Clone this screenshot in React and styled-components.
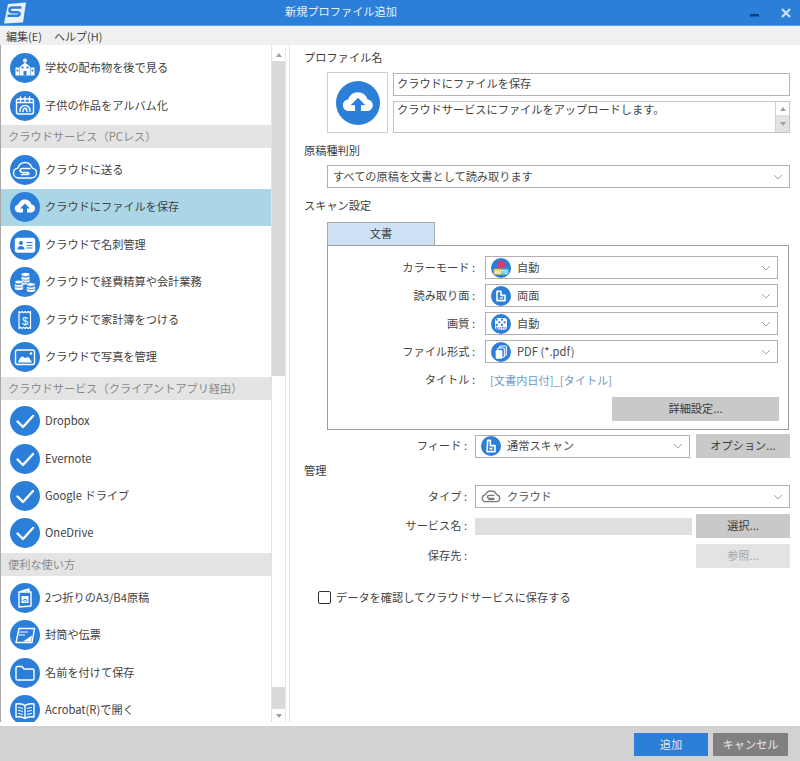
import React from 'react';
import styled, { createGlobalStyle } from 'styled-components';

const BLUE = '#2b7fd9';

const GlobalStyle = createGlobalStyle`
    html, body {
        margin: 0;
        padding: 0;
        background: #fff;
    }
    * {
        box-sizing: border-box;
    }
    body {
        font-family: "Noto Sans CJK JP", "Noto Sans", sans-serif;
        font-size: 11.2px;
        color: #424242;
    }
`;

const Window = styled.div`
    width: 800px;
    height: 761px;
    display: grid;
    grid-template-columns: 800px;
    grid-template-rows: 26px 19px 681px 35px;
    overflow: hidden;
`;

const TitleBar = styled.div`
    display: flex;
    align-items: center;
    background: ${BLUE};
    padding: 0 9px 0 3px;
    border-bottom: 1px solid #5f9fe0;
`;

const Title = styled.div`
    margin-left: 258px;
    padding-bottom: 4px;
    color: #e8f1fb;
`;

const WindowButtons = styled.div`
    margin-left: auto;
    display: flex;
    align-items: center;
    gap: 22px;
    svg:first-child {
        margin-top: 4px;
    }
`;

const MenuBar = styled.div`
    display: flex;
    align-items: center;
    gap: 12px;
    padding-left: 6px;
    background: #f0f0f0;
    font-size: 11px;
    color: #444;
`;

const Body = styled.div`
    display: flex;
    min-height: 0;
`;

const Sidebar = styled.div`
    width: 290px;
    height: 677px;
    flex: none;
    display: flex;
    align-items: flex-start;
    border-left: 1px solid #a8a8a8;
    border-right: 1px solid #dedede;
`;

const List = styled.div`
    width: 271px;
    height: 677px;
    flex: none;
    overflow: hidden;
    padding-top: 4.500px;
    border-right: 1px solid #e2e2e2;
`;

const Group = styled.div`
    background: #e4e4e4;
    color: #8a8a8a;
    height: 23px;
    line-height: 22px;
    padding-left: 7px;
    margin: 1px 0 3px;
`;

const Item = styled.div`
    display: flex;
    align-items: center;
    gap: 5px;
    height: 37.400px;
    padding-left: 9px;
    background: ${(p) => (p.$active ? '#aad6e6' : 'transparent')};
`;

const ItemLabel = styled.span`
    margin-top: -2px;
`;

const ScrollColumn = styled.div`
    width: 14px;
    flex: none;
    margin-top: 3px;
    display: flex;
    flex-direction: column;
    border-right: 1px solid #e6e6e6;
`;

const ScrollArrow = styled.div`
    height: ${(p) => p.$h || 13}px;
    display: flex;
    align-items: center;
    justify-content: center;
    background: ${(p) => p.$bg || '#fff'};
    &::after {
        content: '';
        border-left: 3.500px solid transparent;
        border-right: 3.500px solid transparent;
        ${(p) => (p.$down ? 'border-top' : 'border-bottom')}: 4px solid #a0a0a0;
    }
`;

const ScrollPart = styled.div`
    height: ${(p) => p.$h}px;
    background: ${(p) => (p.$thumb ? '#fff' : '#dadada')};
`;

const Main = styled.div`
    flex: 1;
    min-width: 0;
    padding: 5px 10px 0 14px;
`;

const Heading = styled.div`
    height: 16px;
    line-height: 14px;
    margin-top: ${(p) => p.$mt || 0}px;
    color: #3c3c3c;
`;

const ProfileRow = styled.div`
    margin: 6px 0 0 23px;
    display: flex;
    gap: 5px;
    height: 61px;
`;

const IconBox = styled.div`
    width: 61px;
    flex: none;
    display: flex;
    align-items: center;
    justify-content: center;
    border: 1px solid #cfcfcf;
`;

const ProfileFields = styled.div`
    flex: 1;
    display: flex;
    flex-direction: column;
    gap: 5px;
    padding-top: 1px;
`;

const NameInput = styled.div`
    height: 23px;
    line-height: 19px;
    padding-left: 3px;
    border: 1px solid #b4b4b4;
`;

const DescBox = styled.div`
    flex: 1;
    display: flex;
    justify-content: space-between;
    border: 1px solid #c4c4c4;
    padding-left: 3px;
    line-height: 15px;
`;

const DescScroll = styled.div`
    width: 14px;
    display: flex;
    flex-direction: column;
    border-left: 1px solid #d0d0d0;
    background: #f4f4f4;
`;

const Dropdown = styled.div`
    display: flex;
    align-items: center;
    gap: 6px;
    height: 23px;
    padding: 0 6px 0 5px;
    border: 1px solid #b0b0b0;
    background: #fff;
    margin: ${(p) => p.$margin || 0};
    grid-column: ${(p) => p.$span || 'auto'};
    color: ${(p) => p.$color || '#4a4a4a'};
`;

const DropdownText = styled.span`
    flex: 1;
    margin-top: -2px;
`;

const Tab = styled.div`
    width: 108px;
    height: 24px;
    margin: 8px 0 0 23px;
    line-height: 20px;
    text-align: center;
    background: #cfe2f5;
    border: 1px solid #a8a8a8;
    border-bottom: none;
`;

const ScanPanel = styled.div`
    height: 185px;
    margin: -1px 1px 0 23px;
    padding: 10px 10px 0 0;
    border: 1px solid #9c9c9c;
    display: grid;
    grid-template-columns: 147px 1fr;
    column-gap: 10px;
    row-gap: 5px;
    grid-auto-rows: 23px;
`;

const RowLabel = styled.div`
    text-align: right;
    align-self: center;
    margin-top: -2px;
    color: #444;
    white-space: pre;
`;

const TitleLink = styled.div`
    align-self: center;
    padding-left: 5px;
    color: #6f97c6;
`;

const GreyButton = styled.div`
    height: 24px;
    line-height: 23px;
    text-align: center;
    background: ${(p) => (p.$disabled ? '#e3e3e3' : '#c9c9c9')};
    color: ${(p) => (p.$disabled ? '#a8a8a8' : '#3c3c3c')};
`;

const DetailButton = styled(GreyButton)`
    grid-column: 2;
    justify-self: end;
    width: 167px;
    margin: 1px -1px 0 0;
`;

const FormGrid = styled.div`
    display: grid;
    grid-template-columns: 167px 217px 94px;
    column-gap: 4px;
    margin-top: ${(p) => p.$mt}px;
    row-gap: 6px;
    grid-auto-rows: minmax(23px, auto);
    align-items: center;
`;

const FormLabel = styled(RowLabel)`
    margin-right: 4px;
`;

const ServiceField = styled.div`
    height: 17px;
    background: #dfdfdf;
`;

const CheckRow = styled.div`
    display: flex;
    align-items: center;
    gap: 5px;
    margin: 21px 0 0 14px;
    color: #444;
`;

const CheckBox = styled.div`
    width: 13px;
    height: 13px;
    border: 1px solid #333;
    border-radius: 2px;
`;

const Footer = styled.div`
    display: flex;
    justify-content: flex-end;
    align-items: flex-start;
    gap: 5px;
    padding: 7px 12px 0 0;
    background: #d2d2d2;
`;

const FooterButton = styled.div`
    width: ${(p) => p.$w}px;
    height: 23px;
    line-height: 22px;
    text-align: center;
    color: #e8e8e8;
    background: ${(p) => p.$bg};
`;

const Disc = ({ size = 30, children, color = BLUE }) => (
    <svg width={size} height={size} viewBox="0 0 30 30" style={{ flex: 'none' }}>
        <circle cx="15" cy="15" r="15" fill={color} />
        {children}
    </svg>
);

const line = { fill: 'none', stroke: '#fff', strokeWidth: 1.4, strokeLinejoin: 'round', strokeLinecap: 'round' };

const UploadGlyph = () => (
    <>
        <path d="M9 20.500c-2.600 0-4.300-1.800-4.300-4 0-2.100 1.500-3.700 3.600-3.900.7-2.900 3.400-5 6.600-5s5.900 2.100 6.600 5c2.100.2 3.600 1.800 3.600 3.900 0 2.200-1.700 4-4.300 4z" fill="#fff" />
        <path d="M15 11.500l-5 5h3v5h4v-5h3z" fill={BLUE} />
    </>
);

const icons = {
    school: (
        <>
            <circle cx="15" cy="7.500" r="2" fill="#fff" />
            <path d="M15 9.500l5 4v9h-10v-9z" fill="#fff" />
            <rect x="5.500" y="14.500" width="4" height="8" fill="#fff" />
            <rect x="20.500" y="14.500" width="4" height="8" fill="#fff" />
            <rect x="13.500" y="18" width="3" height="4.500" fill={BLUE} />
            <rect x="11.500" y="13.500" width="2" height="2" fill={BLUE} />
            <rect x="16.500" y="13.500" width="2" height="2" fill={BLUE} />
            <rect x="6.600" y="16.500" width="1.800" height="2" fill={BLUE} />
            <rect x="21.600" y="16.500" width="1.800" height="2" fill={BLUE} />
        </>
    ),
    album: (
        <>
            <rect x="6.500" y="8" width="17" height="15" rx="2" {...line} />
            <path d="M6.500 11.500h17M10.500 6v4M15 6v4M19.500 6v4" {...line} />
            <path d="M10 20.500c0-4 2.200-6 5-6s5 2 5 6M13 20.500c0-2 .8-3.200 2-3.200s2 1.200 2 3.200" {...line} />
        </>
    ),
    cloud: (
        <>
            <path d="M9 23c-3.300 0-5.500-2.300-5.500-5 0-2.500 1.800-4.500 4.300-4.900C8.900 10 11.700 7.500 15 7.500s6.100 2.500 7.200 5.600c2.500.4 4.300 2.400 4.300 4.900 0 2.700-2.200 5-5.500 5z" {...line} />
            <path d="M20 13.500h-7c-1.700 0-2.900 1-2.900 2.100s1.200 1.900 2.900 1.900h4.500c.9 0 1.500.4 1.500 1s-.6 1-1.500 1h-6" {...line} strokeWidth="1.500" />
        </>
    ),
    upload: <UploadGlyph />,
    card: (
        <>
            <rect x="5.500" y="8.500" width="19" height="13.500" rx="2" {...line} fill="#fff" />
            <circle cx="11" cy="13" r="2" fill={BLUE} />
            <path d="M7.500 19.500c0-2.500 1.500-3.500 3.500-3.500s3.500 1 3.500 3.500z" fill={BLUE} />
            <path d="M16.500 12.500h6M16.500 15.300h6M16.500 18h6" stroke={BLUE} strokeWidth="1" />
        </>
    ),
    coins: (
        <>
            <ellipse cx="15.500" cy="7.500" rx="4" ry="1.800" fill="#fff" />
            <path d="M11.500 9.500v8h8v-8c-1.500 1.300-6.500 1.300-8 0z" fill="#fff" />
            <path d="M11.500 12.500c1.500 1 6.500 1 8 0M11.500 15c1.500 1 6.500 1 8 0" stroke={BLUE} strokeWidth="0.800" fill="none" />
            <ellipse cx="9" cy="15" rx="4.200" ry="1.800" fill="#fff" stroke={BLUE} strokeWidth="0.600" />
            <path d="M4.800 17v5c1.800 1.300 6.600 1.300 8.400 0v-5c-1.800 1.300-6.600 1.300-8.400 0z" fill="#fff" />
            <path d="M4.800 19.500c1.800 1 6.600 1 8.400 0" stroke={BLUE} strokeWidth="0.800" fill="none" />
            <ellipse cx="21" cy="17.500" rx="4.200" ry="1.800" fill="#fff" stroke={BLUE} strokeWidth="0.600" />
            <path d="M16.800 19.500v4.500c1.800 1.300 6.600 1.300 8.400 0v-4.500c-1.800 1.300-6.600 1.300-8.400 0z" fill="#fff" />
            <path d="M16.800 21.700c1.800 1 6.600 1 8.400 0" stroke={BLUE} strokeWidth="0.800" fill="none" />
        </>
    ),
    receipt: (
        <>
            <path d="M9 6.500l1.500 1.200 1.500-1.200 1.500 1.200 1.500-1.200 1.500 1.200 1.500-1.200 1.500 1.200 1-1.200v17l-1-1.200-1.500 1.200-1.500-1.200-1.500 1.200-1.500-1.200-1.500 1.200-1.500-1.200-1.500 1.200z" {...line} strokeWidth="1.200" />
            <text x="15" y="19.500" fontSize="11" fill="#fff" textAnchor="middle" fontFamily="Liberation Sans, sans-serif">$</text>
        </>
    ),
    photo: (
        <>
            <rect x="5.500" y="8" width="19" height="14.500" rx="2" {...line} />
            <path d="M8 20.500c1-4 3-6 4.500-6 1.200 0 1.800 1.500 3 1.500s1.500-1 2.500-1 2.500 2.500 4 5.500z" fill="#fff" />
            <circle cx="21" cy="11.500" r="1.300" fill="#fff" />
        </>
    ),
    check: <path d="M7.500 15.500l5.500 5.500 10-11" fill="none" stroke="#fff" strokeWidth="2.400" strokeLinecap="round" strokeLinejoin="round" />,
    fold: (
        <>
            <path d="M9 9l10-3v3M9 9v15l12-1V9z" {...line} />
            <path d="M11.500 13h7v7h-7z" fill="#fff" />
            <path d="M13 18c0-2 4-2 4-.5s-3 1-3 0" stroke={BLUE} strokeWidth="1" fill="none" />
        </>
    ),
    slip: (
        <>
            <path d="M9 8.500h15.500l-2.500 14h-16z" {...line} />
            <path d="M9.500 12h8M9 15h5.500" {...line} strokeWidth="1.100" />
            <path d="M22 15.500l-1 6h-8z" fill="#fff" />
        </>
    ),
    folder: <path d="M6 10a1.500 1.500 0 0 1 1.500-1.500h4.500l2 2.500h8.500a1.500 1.500 0 0 1 1.500 1.500v8a1.500 1.500 0 0 1-1.500 1.500h-15a1.500 1.500 0 0 1-1.500-1.500z" {...line} />,
    book: (
        <>
            <path d="M15 10.500c-2-1.500-5.500-2-9-1.500v13c3.500-.5 7 0 9 1.500 2-1.500 5.500-2 9-1.500V9c-3.500-.5-7 0-9 1.500zM15 10.500v13" {...line} />
            <path d="M8.500 12.500l4 .8M8.500 15.500l4 .8M8.500 18.500l4 .8M21.500 12.500l-4 .8M21.500 15.500l-4 .8M21.500 18.500l-4 .8" {...line} strokeWidth="1" />
        </>
    ),
    colorAuto: (
        <>
            <circle cx="15" cy="10" r="6" fill="#d8357a" />
            <rect x="4" y="16" width="22" height="9" rx="2" fill="#eac93a" />
            <rect x="15" y="16" width="11" height="9" fill="#3bb6d8" />
            <text x="15" y="24" fontSize="7" fontWeight="700" fill="#fff" textAnchor="middle" fontFamily="Liberation Sans, sans-serif">AUTO</text>
        </>
    ),
    duplex: (
        <>
            <path d="M9 8h6v6h6v8H9z" fill="none" stroke="#fff" strokeWidth="2.400" strokeLinejoin="round" />
            <path d="M13 17h5v2h-5z" fill="#fff" />
        </>
    ),
    quality: (
        <>
            <rect x="6" y="6" width="18" height="18" rx="4" fill="#fff" />
            {[8.500, 12.500, 16.500, 20.500].flatMap((x, i) =>
                [8.500, 12.500, 16.500].map((y, j) => (i + j) % 2 === 0 && <circle key={`${x}-${y}`} cx={x} cy={y} r="1.700" fill={BLUE} />)
            )}
            <text x="15" y="24" fontSize="6.500" fontWeight="700" fill={BLUE} textAnchor="middle" fontFamily="Liberation Sans, sans-serif">AUTO</text>
        </>
    ),
    pages: (
        <>
            <rect x="13" y="6" width="10" height="14" rx="1.500" {...line} strokeWidth="1.600" />
            <rect x="10" y="9" width="10" height="14" rx="1.500" {...line} strokeWidth="1.600" fill={BLUE} />
            <rect x="7" y="12" width="10" height="13" rx="1.500" fill="#fff" />
        </>
    ),
    feed: (
        <>
            <path d="M10 6.500h4v8h7v9H9z" fill="none" stroke="#fff" strokeWidth="2.400" strokeLinejoin="round" />
            <path d="M11.500 17.500h7l-3.500 4z" fill="#fff" />
        </>
    ),
};

const SmallIcon = ({ name }) => <Disc size={20}>{icons[name]}</Disc>;

const Chevron = () => (
    <svg width="10" height="6" viewBox="0 0 10 6" style={{ flex: 'none' }}>
        <path d="M1 1l4 4 4-4" fill="none" stroke="#a4a4a4" strokeWidth="1" />
    </svg>
);

const Select = ({ icon, text, children, ...rest }) => (
    <Dropdown {...rest}>
        {children}
        {icon && <SmallIcon name={icon} />}
        <DropdownText>{text}</DropdownText>
        <Chevron />
    </Dropdown>
);

const sections = [
    {
        items: [
            ['school', '学校の配布物を後で見る'],
            ['album', '子供の作品をアルバム化'],
        ],
    },
    {
        title: 'クラウドサービス（PCレス）',
        items: [
            ['cloud', 'クラウドに送る'],
            ['upload', 'クラウドにファイルを保存', true],
            ['card', 'クラウドで名刺管理'],
            ['coins', 'クラウドで経費精算や会計業務'],
            ['receipt', 'クラウドで家計簿をつける'],
            ['photo', 'クラウドで写真を管理'],
        ],
    },
    {
        title: 'クラウドサービス（クライアントアプリ経由）',
        items: [
            ['check', 'Dropbox'],
            ['check', 'Evernote'],
            ['check', 'Google ドライブ'],
            ['check', 'OneDrive'],
        ],
    },
    {
        title: '便利な使い方',
        items: [
            ['fold', '2つ折りのA3/B4原稿'],
            ['slip', '封筒や伝票'],
            ['folder', '名前を付けて保存'],
            ['book', 'Acrobat(R)で開く'],
        ],
    },
];

const scanRows = [
    ['カラーモード :', 'colorAuto', '自動'],
    ['読み取り面 :', 'duplex', '両面'],
    ['画質 :', 'quality', '自動'],
    ['ファイル形式 :', 'pages', 'PDF (*.pdf)'],
];

export default function App() {
    return (
        <Window>
            <GlobalStyle />
            <TitleBar>
                <svg width="24" height="22" viewBox="0 0 24 22" style={{ flex: 'none' }}>
                    <path d="M5 2l18-1.500-3 20L1 21.500z" fill="#e6f0fa" />
                    <path d="M18.500 5.500H9.500c-2 0-3 1.200-3 2.500s1 2.300 3 2.300h5c1.500 0 2 .7 2 1.500s-.8 2-2.500 2H4.500" fill="none" stroke={BLUE} strokeWidth="2.600" />
                </svg>
                <Title>新規プロファイル追加</Title>
                <WindowButtons>
                    <svg width="9" height="4" viewBox="0 0 9 4"><rect width="9" height="2.500" y="1" fill="#123f78" /></svg>
                    <svg width="10" height="10" viewBox="0 0 10 10"><path d="M1 1l8 8M9 1l-8 8" stroke="#cfe3f8" strokeWidth="2.200" /></svg>
                </WindowButtons>
            </TitleBar>
            <MenuBar>
                <span>編集(E)</span>
                <span>ヘルプ(H)</span>
            </MenuBar>
            <Body>
                <Sidebar>
                    <List>
                        {sections.map((section, i) => (
                            <div key={i}>
                                {section.title && <Group>{section.title}</Group>}
                                {section.items.map(([icon, label, active]) => (
                                    <Item key={label} $active={active}>
                                        <Disc>{icons[icon]}</Disc>
                                        <ItemLabel>{label}</ItemLabel>
                                    </Item>
                                ))}
                            </div>
                        ))}
                    </List>
                    <ScrollColumn>
                        <ScrollArrow />
                        <ScrollPart $h={315} />
                        <ScrollPart $h={311} $thumb />
                        <ScrollPart $h={22} />
                        <ScrollArrow $down />
                    </ScrollColumn>
                </Sidebar>
                <Main>
                    <Heading>プロファイル名</Heading>
                    <ProfileRow>
                        <IconBox>
                            <Disc size={44}>{icons.upload}</Disc>
                        </IconBox>
                        <ProfileFields>
                            <NameInput>クラウドにファイルを保存</NameInput>
                            <DescBox>
                                クラウドサービスにファイルをアップロードします。
                                <DescScroll>
                                    <ScrollArrow $h={13} />
                                    <ScrollArrow $h={17} $down $bg="#e2e2e2" />
                                </DescScroll>
                            </DescBox>
                        </ProfileFields>
                    </ProfileRow>
                    <Heading $mt={10}>原稿種判別</Heading>
                    <Select $margin="6px 0 0 23px" text="すべての原稿を文書として読み取ります" />
                    <Heading $mt={10}>スキャン設定</Heading>
                    <Tab>文書</Tab>
                    <ScanPanel>
                        {scanRows.map(([label, icon, text]) => (
                            <React.Fragment key={label}>
                                <RowLabel>{label}</RowLabel>
                                <Select icon={icon} text={text} />
                            </React.Fragment>
                        ))}
                        <RowLabel>タイトル :</RowLabel>
                        <TitleLink>[文書内日付]_[タイトル]</TitleLink>
                        <DetailButton>詳細設定...</DetailButton>
                    </ScanPanel>
                    <FormGrid $mt={4}>
                        <FormLabel>フィード :</FormLabel>
                        <Select $margin="0 2px 0 0" icon="feed" text="通常スキャン" />
                        <GreyButton>オプション...</GreyButton>
                    </FormGrid>
                    <Heading $mt={5}>管理</Heading>
                    <FormGrid $mt={6}>
                        <FormLabel>タイプ :</FormLabel>
                        <Select $span="span 2" $color="#555" text="クラウド">
                            <Disc size={20} color="#fff">
                                <path d="M8 22c-3.500 0-6-2.300-6-5.300 0-2.700 2-4.800 4.700-5.200C8 8 11 6 15 6s7 2 8.300 5.500c2.700.4 4.700 2.500 4.700 5.200 0 3-2.500 5.300-6 5.300z" fill="none" stroke="#7b7b7b" strokeWidth="2" />
                                <path d="M20 12.500h-7c-2 0-3.300 1.200-3.300 2.500s1.300 2 3.300 2h5c1 0 1.500.5 1.500 1s-.6 1-1.500 1h-7" fill="none" stroke="#7b7b7b" strokeWidth="2" />
                            </Disc>
                        </Select>
                        <FormLabel>サービス名 :</FormLabel>
                        <ServiceField />
                        <GreyButton>選択...</GreyButton>
                        <FormLabel>保存先 :</FormLabel>
                        <span />
                        <GreyButton $disabled>参照...</GreyButton>
                    </FormGrid>
                    <CheckRow>
                        <CheckBox />
                        データを確認してクラウドサービスに保存する
                    </CheckRow>
                </Main>
            </Body>
            <Footer>
                <FooterButton $w={74} $bg={BLUE}>追加</FooterButton>
                <FooterButton $w={75} $bg="#808080">キャンセル</FooterButton>
            </Footer>
        </Window>
    );
}
